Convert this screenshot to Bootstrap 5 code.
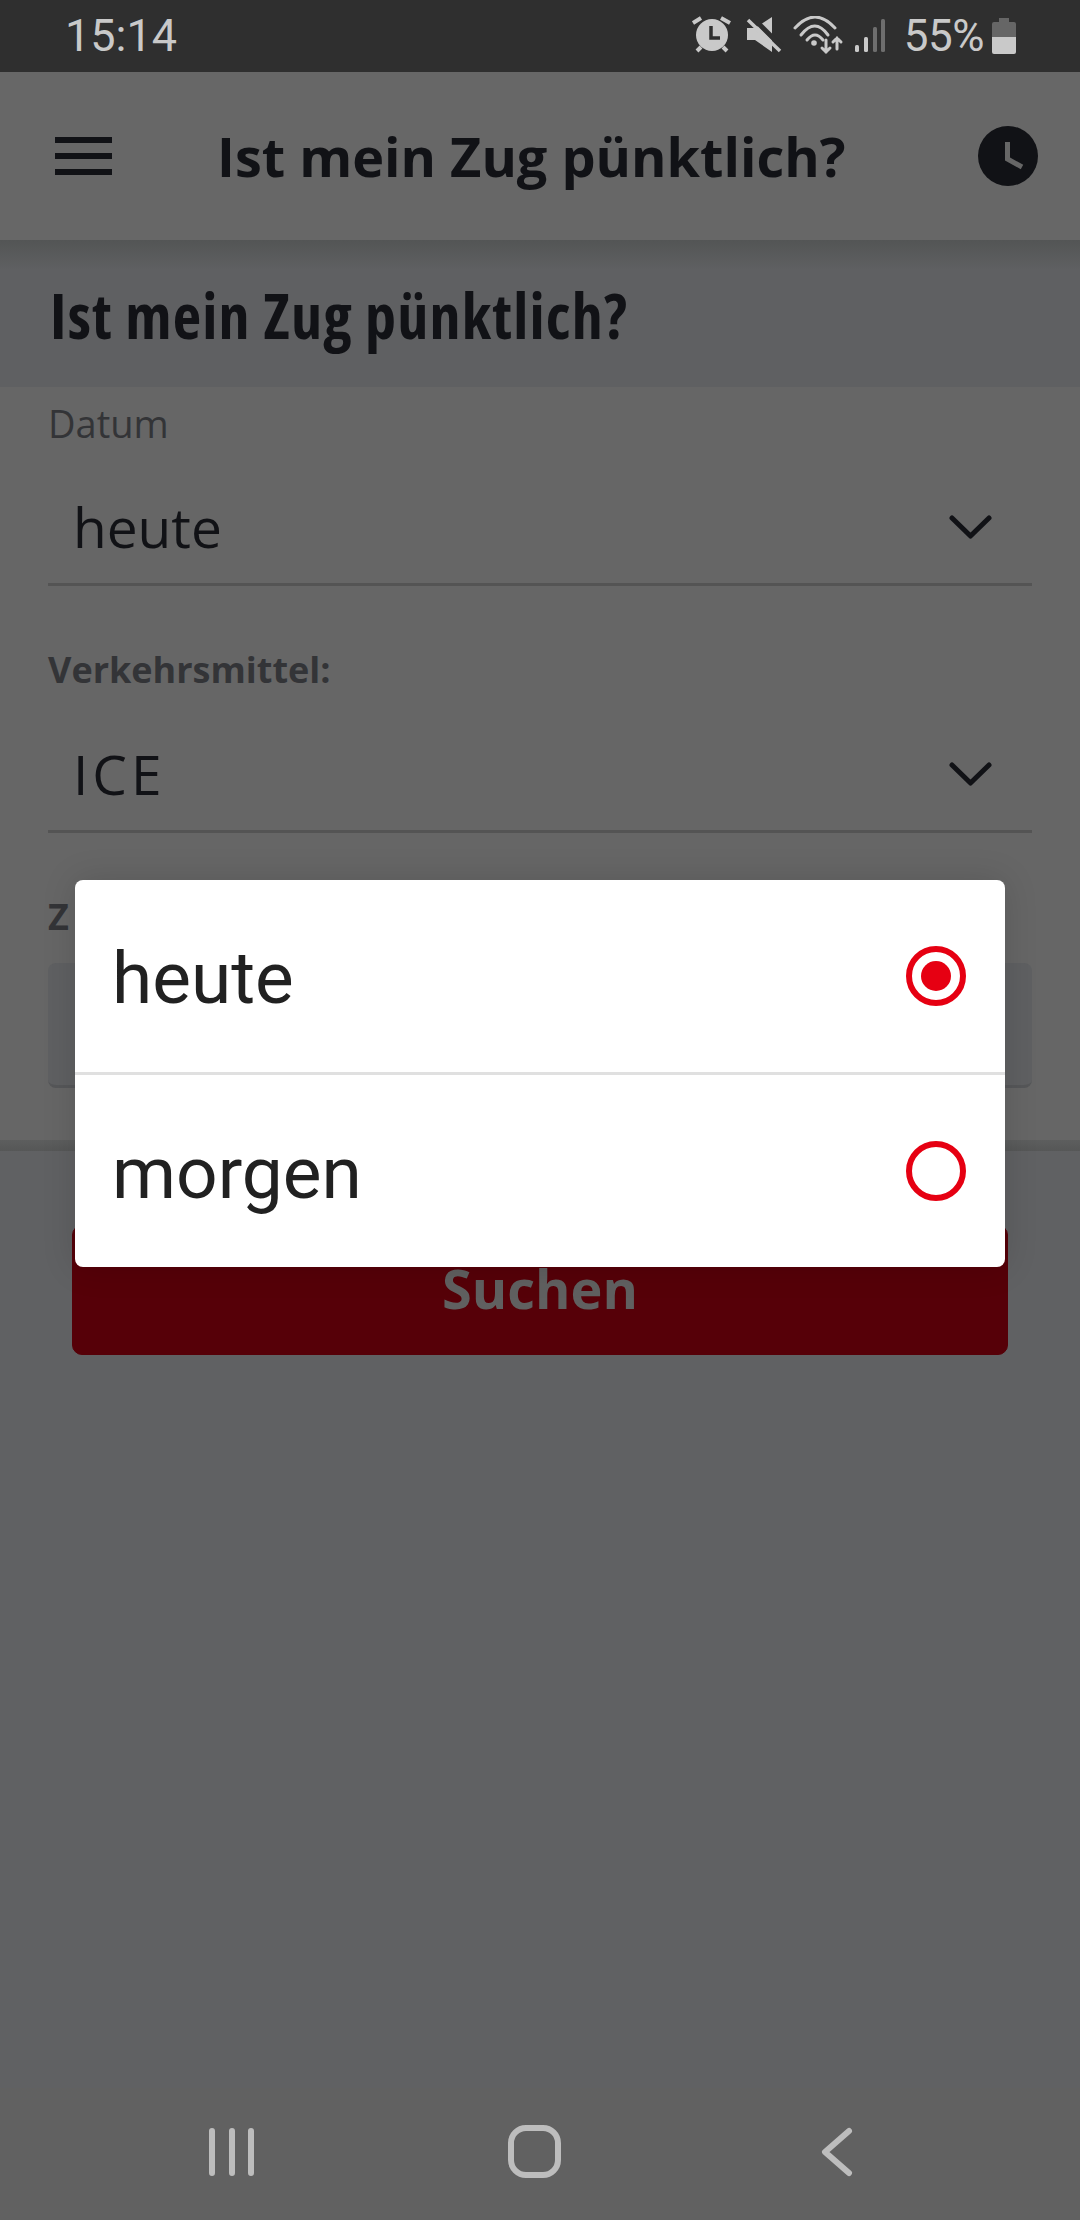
<!DOCTYPE html>
<html lang="de">
<head>
  <meta charset="UTF-8">
  <meta name="viewport" content="width=device-width, initial-scale=1.0">
  <title>Ist mein Zug pünktlich?</title>
  <link rel="stylesheet" href="https://cdn.jsdelivr.net/npm/bootstrap@5.3.0/dist/css/bootstrap.min.css">
  <script src="https://cdn.jsdelivr.net/npm/bootstrap@5.3.0/dist/js/bootstrap.bundle.min.js"></script>

  <style>
    html, body { height: 100%; }
    body {
      background: #606163;
      font-family: "Open Sans", "Liberation Sans", sans-serif;
      color: #111216;
      position: relative;
      overflow: hidden;
    }

    /* Status bar */
    .status-bar {
      height: 72px;
      background: #2f2f2f;
      color: #c9c9c9;
      font-family: Roboto, sans-serif;
      padding: 0 64px 0 65px;
    }
    .status-time { font-size: 45px; line-height: 72px; }
    .status-pct { font-size: 44px; line-height: 72px; margin: 0 8px 0 13px; letter-spacing: -0.5px; }

    /* App bar */
    .app-bar {
      height: 168px;
      background: #676767;
      padding: 0 42px 0 55px;
    }
    .app-title {
      font-size: 54px;
      font-weight: 700;
      margin: 0 0 0 105px;
      line-height: 1;
      flex-grow: 1;
    }
    .burger { width: 57px; }
    .burger span { display: block; height: 6px; background: #111216; margin-bottom: 10px; }
    .burger span:last-child { margin-bottom: 0; }

    /* Page heading */
    .head-band {
      height: 147px;
      background: linear-gradient(#535555, #5f6062 30px);
      padding: 4px 50px 0;
    }
    .head-band h1 {
      font-size: 62px;
      font-weight: 700;
      font-stretch: 75%;
      margin: 0;
      letter-spacing: 1.2px;
    }

    /* Form */
    .form-area {
      height: 753px;
      background: #666;
      padding: 12px 48px 0;
    }
    .field-label { font-size: 38px; line-height: 48px; color: #333437; margin: 0; }
    .field-label.strong { font-size: 36px; font-weight: 700; margin-top: 60px; }
    .field-label.wide { letter-spacing: 6px; }
    .field-select {
      height: 115px;
      margin-top: 24px;
      border-bottom: 3px solid #545454;
      padding: 0 40px 0 25px;
      font-size: 55px;
    }
    .field-select .spaced { letter-spacing: 4px; }
    .field-input {
      height: 125px;
      margin-top: 22px;
      background: #5f6062;
      border-bottom: 3px solid #565759;
      border-radius: 8px;
    }
    .foot-shadow { height: 11px; background: linear-gradient(#5d5e5e, #565757); }

    .search-btn {
      --bs-btn-bg: #560008;
      --bs-btn-color: #606060;
      --bs-btn-border-color: #560008;
      --bs-btn-border-radius: 10px;
      display: block;
      width: 936px;
      height: 130px;
      margin: 74px 0 0 72px;
      font-size: 54px;
      font-weight: 700;
      line-height: 1;
      padding-bottom: 10px;
    }

    /* Dialog over the dimmed page */
    .date-dialog {
      position: absolute;
      left: 75px;
      top: 880px;
      width: 930px;
      --bs-list-group-border-radius: 8px;
      --bs-list-group-border-width: 0;
      font-family: Roboto, sans-serif;
      box-shadow: 0 0 34px rgba(0, 0, 0, .14);
    }
    .date-dialog .list-group-item {
      height: 192px;
      padding: 0 39px 0 37px;
      font-size: 73px;
      color: #212121;
    }
    .date-dialog .list-group-item + .list-group-item {
      height: 195px;
      border-top: 3px solid #e0e0e0;
    }
    .option-text { padding-top: 5px; }

    /* Android nav bar */
    .nav-keys {
      height: 132px;
      margin-top: auto;
      background: #616161;
      padding-top: 33px;
    }
    .nav-keys svg { display: block; }
  </style>
</head>
<body class="d-flex flex-column">

<!-- Status bar -->
<div class="status-bar d-flex align-items-center justify-content-between">
  <span class="status-time">15:14</span>
  <div class="d-flex align-items-center">
    <svg width="200" height="40" viewBox="0 0 200 40" fill="#c9c9c9">
      <!-- alarm -->
      <path d="M2 7 L10 2 M39 7 L30 2 M6 35 L10 31 M36 35 L32 31" stroke="#c9c9c9" stroke-width="4" fill="none"/>
      <circle cx="21" cy="19" r="16"/>
      <path d="M20 10 V22 H29" stroke="#2f2f2f" stroke-width="3.5" fill="none"/>
      <!-- mute -->
      <path d="M56 12 H64 L81 1 V36 L64 24 H56 Z"/>
      <path d="M61 1 L91 31" stroke="#2f2f2f" stroke-width="5" fill="none"/>
      <path d="M57 4 L89 35" stroke="#c9c9c9" stroke-width="3.5" fill="none"/>
      <!-- wifi -->
      <g stroke="#c9c9c9" stroke-width="3" fill="none" stroke-linecap="round">
        <path d="M104 12 Q124 -10 144 12"/>
        <path d="M110 19 Q124 1 137 19"/>
        <path d="M116 24 Q124 14 132 24"/>
        <path d="M135 24 V36 M131 32 L135 36 L139 32"/>
        <path d="M146 33 V22 M142 26 L146 22 L150 26"/>
      </g>
      <circle cx="123" cy="27" r="2.8"/>
      <!-- signal -->
      <rect x="164" y="29" width="4" height="7" rx="1.5"/>
      <rect x="173" y="21" width="4" height="15" rx="1.5"/>
      <rect x="182" y="11" width="4" height="25" rx="1.5" fill="#6e6e6e"/>
      <rect x="190" y="3" width="4" height="33" rx="1.5" fill="#6e6e6e"/>
    </svg>
    <span class="status-pct">55%</span>
    <svg width="24" height="36" viewBox="0 0 24 36">
      <path d="M7 0 H17 V4 H22 Q24 4 24 6 V19 H0 V6 Q0 4 2 4 H7 Z" fill="#666"/>
      <path d="M0 19 H24 V34 Q24 36 22 36 H2 Q0 36 0 34 Z" fill="#c9c9c9"/>
    </svg>
  </div>
</div>

<!-- App bar -->
<div class="app-bar d-flex align-items-center">
  <div class="burger"><span></span><span></span><span></span></div>
  <p class="app-title">Ist mein Zug pünktlich?</p>
  <svg width="60" height="60" viewBox="0 0 60 60">
    <circle cx="30" cy="30" r="30" fill="#111216"/>
    <path d="M29.5 16 V33 L44 41" stroke="#666" stroke-width="5" fill="none"/>
  </svg>
</div>

<div class="head-band d-flex align-items-center">
  <h1>Ist mein Zug pünktlich?</h1>
</div>

<!-- Form -->
<div class="form-area">
  <p class="field-label">Datum</p>
  <div class="field-select d-flex align-items-center justify-content-between">
    <span>heute</span>
    <svg width="43" height="24" viewBox="0 0 43 24"><path d="M3 3 L21.5 21 L40 3" stroke="#111216" stroke-width="5" fill="none" stroke-linecap="round" stroke-linejoin="round"/></svg>
  </div>
  <p class="field-label strong">Verkehrsmittel:</p>
  <div class="field-select d-flex align-items-center justify-content-between">
    <span class="spaced">ICE</span>
    <svg width="43" height="24" viewBox="0 0 43 24"><path d="M3 3 L21.5 21 L40 3" stroke="#111216" stroke-width="5" fill="none" stroke-linecap="round" stroke-linejoin="round"/></svg>
  </div>
  <p class="field-label strong wide">Zugnummer:</p>
  <div class="field-input"></div>
</div>
<div class="foot-shadow"></div>

<button type="button" class="btn search-btn">Suchen</button>

<!-- Dialog -->
<div class="date-dialog list-group">
  <div class="list-group-item d-flex align-items-center justify-content-between">
    <span class="option-text">heute</span>
    <svg width="60" height="60" viewBox="0 0 60 60"><circle cx="30" cy="30" r="27" fill="none" stroke="#e60012" stroke-width="6"/><circle cx="30" cy="30" r="15" fill="#e60012"/></svg>
  </div>
  <div class="list-group-item d-flex align-items-center justify-content-between">
    <span class="option-text">morgen</span>
    <svg width="60" height="60" viewBox="0 0 60 60"><circle cx="30" cy="30" r="27" fill="none" stroke="#e60012" stroke-width="6"/></svg>
  </div>
</div>

<!-- Android nav keys -->
<div class="nav-keys">
  <svg width="1080" height="64" viewBox="0 2120 1080 64" fill="none" stroke="#bdbdbd" stroke-width="6" stroke-linecap="round" stroke-linejoin="round">
    <path d="M212 2130 V2172 M232 2130 V2172 M251 2130 V2172"/>
    <rect x="511" y="2127" width="47" height="47" rx="15"/>
    <path d="M849 2130 L825 2151 L849 2172" />
  </svg>
</div>

</body>
</html>
